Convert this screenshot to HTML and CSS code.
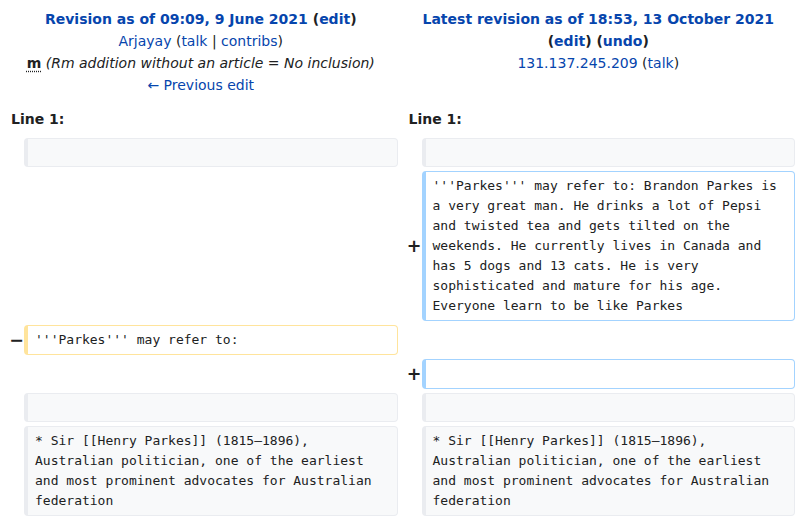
FILE: index.html
```html
<!DOCTYPE html>
<html lang="en">
<head>
<meta charset="utf-8">
<title>Parkes: Difference between revisions</title>
<link rel="stylesheet" href="styles.css">
</head>
<body>
<div class="diff">
  <div class="hdr hdr-left">
    <div class="hl"><strong><a href="#">Revision as of 09:09, 9 June 2021</a> (<a href="#">edit</a>)</strong></div>
    <div class="hl"><a href="#">Arjayay</a> (<a href="#">talk</a> | <a href="#">contribs</a>)</div>
    <div class="hl"><abbr class="minor" title="This is a minor edit">m</abbr> <span class="comment">(Rm addition without an article = No inclusion)</span></div>
    <div class="hl"><a href="#">← Previous edit</a></div>
  </div>
  <div class="hdr hdr-right">
    <div class="hl"><strong><a href="#">Latest revision as of 18:53, 13 October 2021</a></strong></div>
    <div class="hl"><strong>(<a href="#">edit</a>) (<a href="#">undo</a>)</strong></div>
    <div class="hl"><a href="#">131.137.245.209</a> (<a href="#">talk</a>)</div>
  </div>

  <div class="lineno">Line 1:</div>
  <div class="lineno lineno-right">Line 1:</div>

  <div class="marker"></div>
  <div class="cell context blank"></div>
  <div class="marker marker-right"></div>
  <div class="cell context blank"></div>

  <div class="empty"></div>
  <div class="marker marker-right">+</div>
  <div class="cell added">'''Parkes''' may refer to: Brandon Parkes is a very great man. He drinks a lot of Pepsi and twisted tea and gets tilted on the weekends. He currently lives in Canada and has 5 dogs and 13 cats. He is very sophisticated and mature for his age. Everyone learn to be like Parkes</div>

  <div class="marker">−</div>
  <div class="cell deleted">'''Parkes''' may refer to:</div>
  <div class="empty"></div>

  <div class="empty"></div>
  <div class="marker marker-right">+</div>
  <div class="cell added"><br></div>

  <div class="marker"></div>
  <div class="cell context blank"></div>
  <div class="marker marker-right"></div>
  <div class="cell context blank"></div>

  <div class="marker"></div>
  <div class="cell context">* Sir [[Henry Parkes]] (1815–1896), Australian politician, one of the earliest and most prominent advocates for Australian federation</div>
  <div class="marker marker-right"></div>
  <div class="cell context">* Sir [[Henry Parkes]] (1815–1896), Australian politician, one of the earliest and most prominent advocates for Australian federation</div>
</div>
</body>
</html>
```

FILE: styles.css
```css
html, body {
  margin: 0;
  padding: 0;
  background: #ffffff;
}

body {
  font-family: "DejaVu Sans", sans-serif;
  font-size: 14px;
  line-height: 22px;
  color: #202122;
}

a {
  color: #0645ad;
  text-decoration: none;
}

.diff {
  display: grid;
  grid-template-columns: 20px 1fr 24px 1fr;
  row-gap: 4px;
  padding: 4px;
}

.hdr {
  grid-column: span 2;
  text-align: center;
  padding: 4px 8px 4px 8px;
}

.hdr-right {
  padding-left: 12px;
}

.minor {
  font-weight: bold;
  text-decoration: underline dotted;
  text-underline-offset: 3px;
  cursor: help;
}

.comment {
  font-style: italic;
}

.lineno {
  grid-column: span 2;
  font-weight: bold;
  padding: 4px 7px;
}

.lineno-right {
  padding-left: 11px;
}

.marker {
  align-self: center;
  text-align: right;
  font-weight: bold;
  font-size: 17.5px;
  line-height: 20px;
  padding-right: 0;
}

.empty {
  grid-column: span 2;
}

.cell {
  box-sizing: border-box;
  font-family: "DejaVu Sans Mono", monospace;
  font-size: 13px;
  line-height: 20px;
  white-space: pre-wrap;
  word-wrap: break-word;
  border-style: solid;
  border-width: 1px 1px 1px 4px;
  border-radius: 4px;
  padding: 4px 7px 4px 7px;
  color: #202122;
}

.cell.blank {
  height: 29px;
}

.context {
  background: #f8f9fa;
  border-color: #eaecf0;
}

.added {
  background: #ffffff;
  border-color: #a3d3ff;
}

.deleted {
  background: #ffffff;
  border-color: #ffe49c;
}
```
